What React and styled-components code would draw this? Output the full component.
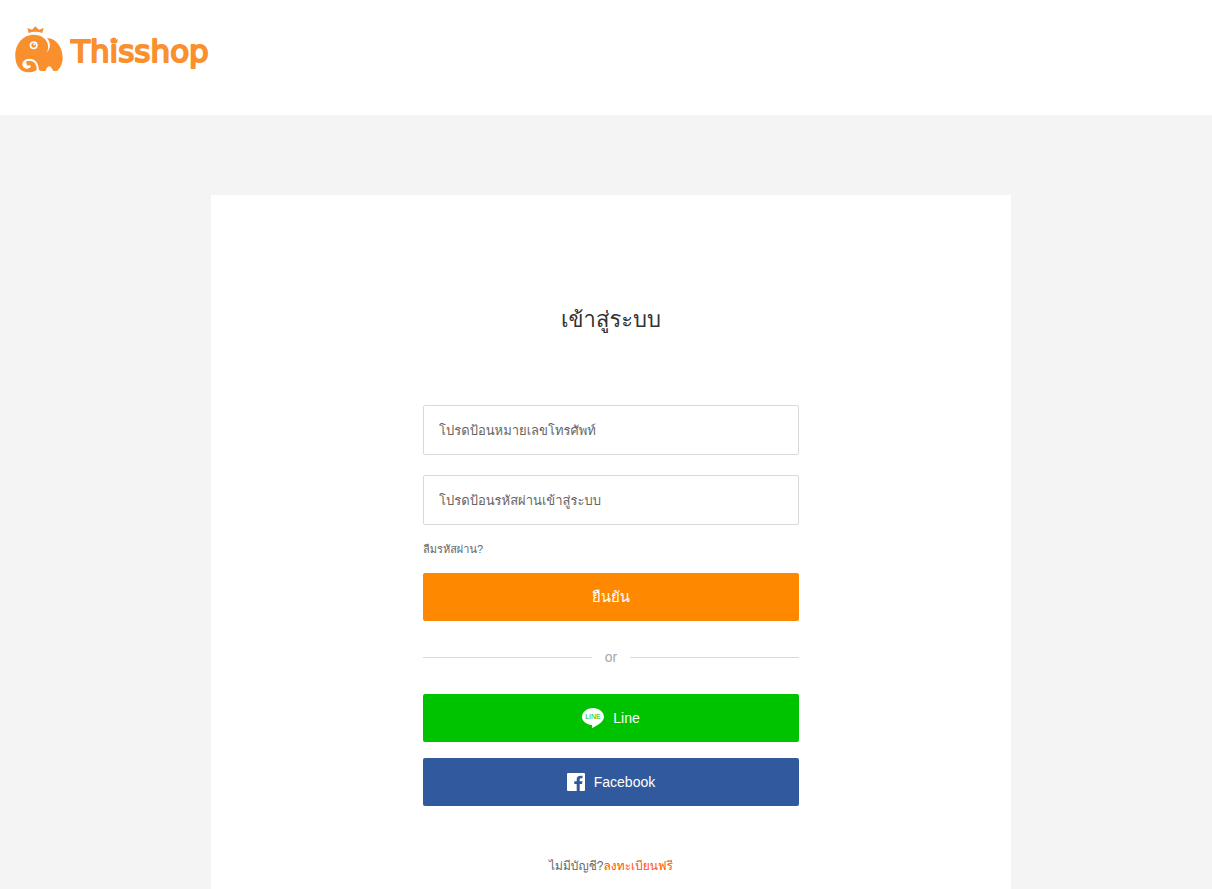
import React, { useState } from 'react';
import styled, { createGlobalStyle } from 'styled-components';

const COLORS = {
  brand: '#fa8f2d',
  primary: '#fe8800',
  line: '#00c300',
  facebook: '#31599d',
  link: '#ff5500',
  text: '#333333',
  textSecondary: '#666666',
  textMuted: '#a6a6a6',
  border: '#d9d9d9',
  bgPage: '#f4f4f4',
  bgWhite: '#ffffff',
};

const GlobalStyle = createGlobalStyle`
  *, *::before, *::after {
    box-sizing: border-box;
  }

  body {
    margin: 0;
    background: ${COLORS.bgPage};
    color: ${COLORS.text};
    font-family: "Liberation Sans", Tahoma, Loma, "Noto Sans Thai", sans-serif;
    font-size: 14px;
  }
`;

const Page = styled.div`
  display: flex;
  flex-direction: column;
  min-height: 100vh;
`;

const Header = styled.header`
  height: 115px;
  padding: 25px 15px;
  background: ${COLORS.bgWhite};
`;

const LogoLink = styled.a`
  display: inline-flex;
  align-items: center;
  gap: 7px;
  height: 48px;
  color: ${COLORS.brand};
  text-decoration: none;
`;

const Main = styled.main`
  display: flex;
  flex: 1;
  justify-content: center;
  padding: 80px 0 0 10px;
`;

const Card = styled.section`
  width: 100%;
  max-width: 800px;
  padding: 105px 24px 12px;
  background: ${COLORS.bgWhite};
`;

const Form = styled.form`
  display: flex;
  flex-direction: column;
  width: 100%;
  max-width: 376px;
  margin: 0 auto;
`;

const Title = styled.h1`
  margin: 0 0 65px;
  font-size: 22px;
  font-weight: 400;
  line-height: 40px;
  text-align: center;
`;

const Input = styled.input`
  width: 100%;
  height: 50px;
  margin-bottom: ${props => (props.$last ? '14px' : '20px')};
  padding: 0 15px;
  border: 1px solid ${COLORS.border};
  border-radius: 2px;
  outline: none;
  background: ${COLORS.bgWhite};
  color: ${COLORS.text};
  font-family: inherit;
  font-size: 13px;

  &::placeholder {
    color: ${COLORS.textSecondary};
    opacity: 1;
  }

  &:focus {
    border-color: ${COLORS.primary};
  }
`;

const ForgotLink = styled.a`
  align-self: flex-start;
  margin-bottom: 14px;
  color: ${COLORS.textSecondary};
  font-size: 11px;
  line-height: 20px;
  text-decoration: none;
`;

const Button = styled.button`
  display: flex;
  align-items: center;
  justify-content: center;
  gap: 9px;
  width: 100%;
  height: 48px;
  margin: 0 0 ${props => (props.$spaced ? '16px' : '0')};
  padding: 0;
  border: 0;
  border-radius: 2px;
  background: ${props => props.$color};
  color: #fff;
  font-family: inherit;
  font-size: ${props => (props.$large ? '15px' : '14px')};
  cursor: pointer;
`;

const Divider = styled.div`
  display: flex;
  align-items: center;
  gap: 13px;
  margin: 26px 0 27px;
  color: ${COLORS.textMuted};
  line-height: 20px;

  &::before,
  &::after {
    content: '';
    flex: 1;
    height: 1px;
    background: ${COLORS.border};
  }
`;

const Register = styled.p`
  margin: 50px 0 0;
  color: ${COLORS.textSecondary};
  font-size: 12px;
  line-height: 20px;
  text-align: center;

  a {
    color: ${COLORS.link};
    text-decoration: none;
  }
`;

const ElephantIcon = () => (
  <svg width="48" height="48" viewBox="45 30 144 144" aria-hidden="true">
    <path
      fill="currentColor"
      d="M82 39 L96 44 L106 34 L117 44 L131 39 L127 54 Q106 47 86 54 Z"
    />
    <path
      fill="currentColor"
      d="M46 126 C44 88 68 59 101 59 C114 59 125 63 132 70 C144 81 150 100 138 114 C153 103 153 82 141 69 C170 70 188 97 188 130 C188 145 181 159 171 168 L162 168 C157 168 155 154 148 154 C140 154 139 168 134 168 L124 168 C119 168 118 166 115 160 C110 168 99 172 88 172 C62 173 47 154 46 126 Z"
    />
    <path
      fill="none"
      stroke="#fff"
      strokeWidth="6"
      strokeLinecap="round"
      d="M113 170 C115 147 104 134 89 134 C76 134 69 141 70 149 C71 158 82 161 89 154"
    />
    <path fill="#fff" d="M68 146 C68 159 82 164 92 155 L90 151 C82 153 78 149 80 143 C76 139 70 140 68 146 Z" />
    <circle cx="101" cy="91" r="12" fill="#fff" />
    <circle cx="101" cy="91" r="7" fill="currentColor" />
    <circle cx="103" cy="88" r="3" fill="#fff" />
  </svg>
);

const Wordmark = () => (
  <svg width="144" height="48" viewBox="0 0 144 48">
    <text
      x="1"
      y="37"
      fill="currentColor"
      stroke="currentColor"
      strokeWidth="2"
      strokeLinejoin="round"
      fontFamily="DejaVu Sans, sans-serif"
      fontSize="31"
    >
      Thisshop
    </text>
    <path fill="currentColor" d="M40 14 L42 15 L44 12 L46 15 L48 14 L47 18 H41 Z" />
  </svg>
);

const LineIcon = () => (
  <svg width="22" height="20" viewBox="0 0 22 20" aria-hidden="true">
    <path
      fill="#fff"
      d="M11 0 C5 0 0 4 0 9 C0 13 4 16 9 17 C11 17 10 18 10 20 C14 18 22 14 22 9 C22 4 17 0 11 0 Z"
    />
    <text
      x="11"
      y="11"
      fill={COLORS.line}
      fontFamily="Liberation Sans, sans-serif"
      fontSize="7"
      textAnchor="middle"
    >
      LINE
    </text>
  </svg>
);

const FacebookIcon = () => (
  <svg width="18" height="18" viewBox="0 0 18 18" aria-hidden="true">
    <path
      fill="#fff"
      d="M1 0 H17 Q18 0 18 1 V17 Q18 18 17 18 H12.7 V11 H15 L15.5 8.2 H12.7 V6.5 C12.7 5.6 13.1 5.2 14 5.2 H15.5 V2.8 C12 2.3 9.7 3.2 9.7 6.2 V8.2 H7.3 V11 H9.7 V18 H1 Q0 18 0 17 V1 Q0 0 1 0 Z"
    />
  </svg>
);

export default function App() {
  const [phone, setPhone] = useState('');
  const [password, setPassword] = useState('');

  return (
    <Page>
      <GlobalStyle />
      <Header>
        <LogoLink href="#home">
          <ElephantIcon />
          <Wordmark />
        </LogoLink>
      </Header>
      <Main>
        <Card>
          <Form onSubmit={e => e.preventDefault()}>
            <Title>เข้าสู่ระบบ</Title>
            <Input
              type="tel"
              aria-label="โปรดป้อนหมายเลขโทรศัพท์"
              placeholder="โปรดป้อนหมายเลขโทรศัพท์"
              value={phone}
              onChange={e => setPhone(e.target.value)}
            />
            <Input
              $last
              type="password"
              aria-label="โปรดป้อนรหัสผ่านเข้าสู่ระบบ"
              placeholder="โปรดป้อนรหัสผ่านเข้าสู่ระบบ"
              value={password}
              onChange={e => setPassword(e.target.value)}
            />
            <ForgotLink href="#forgot">ลืมรหัสผ่าน?</ForgotLink>
            <Button type="submit" $color={COLORS.primary} $large>
              ยืนยัน
            </Button>
            <Divider>or</Divider>
            <Button type="button" $color={COLORS.line} $spaced>
              <LineIcon />
              Line
            </Button>
            <Button type="button" $color={COLORS.facebook}>
              <FacebookIcon />
              Facebook
            </Button>
            <Register>
              ไม่มีบัญชี?<a href="#register">ลงทะเบียนฟรี</a>
            </Register>
          </Form>
        </Card>
      </Main>
    </Page>
  );
}
